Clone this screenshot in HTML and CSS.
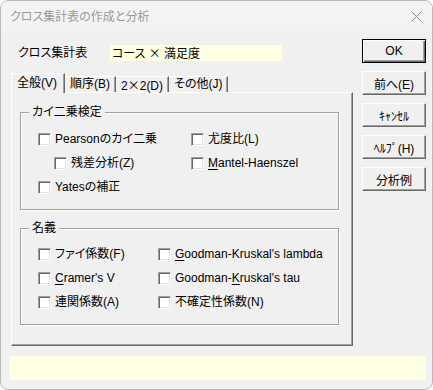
FILE: index.html
```html
<!DOCTYPE html>
<html lang="ja">
<head>
<meta charset="utf-8">
<title>クロス集計表の作成と分析</title>
<link rel="stylesheet" href="styles.css">
</head>
<body>
<div class="window">
  <div class="titlebar">
    <span class="title">クロス集計表の作成と分析</span>
    <svg class="close" width="11" height="11" viewBox="0 0 11 11"><path d="M0.5 0.5L10.5 10.5M10.5 0.5L0.5 10.5" stroke="#8c8c8c" stroke-width="1" fill="none"/></svg>
  </div>
  <div class="client">
    <div class="top">
      <div class="main">
        <div class="field-row">
          <span class="field-label">クロス集計表</span>
          <span class="field-value">コース <span class="cjk">×</span> 満足度</span>
        </div>
        <div class="tabs">
          <div class="tab active">全般(V)</div>
          <div class="tab">順序(B)</div>
          <div class="tab">2<span class="cjk">×</span>2(D)</div>
          <div class="tab">その他(J)</div>
        </div>
        <div class="panel">
          <fieldset class="group">
            <legend>カイ二乗検定</legend>
            <div class="grid grid-chi">
              <label class="chk"><span class="box"></span><span>Pearsonのカイ二乗</span></label>
              <label class="chk"><span class="box"></span><span>尤度比(L)</span></label>
              <label class="chk indent"><span class="box"></span><span>残差分析(Z)</span></label>
              <label class="chk"><span class="box"></span><span><u>M</u>antel-Haenszel</span></label>
              <label class="chk"><span class="box"></span><span>Yatesの補正</span></label>
            </div>
          </fieldset>
          <fieldset class="group group-nominal">
            <legend>名義</legend>
            <div class="grid grid-nom">
              <label class="chk"><span class="box"></span><span>ファイ係数(F)</span></label>
              <label class="chk"><span class="box"></span><span><u>G</u>oodman-Kruskal's lambda</span></label>
              <label class="chk"><span class="box"></span><span><u>C</u>ramer's V</span></label>
              <label class="chk"><span class="box"></span><span>Goodman-<u>K</u>ruskal's tau</span></label>
              <label class="chk"><span class="box"></span><span>連関係数(A)</span></label>
              <label class="chk"><span class="box"></span><span>不確定性係数(N)</span></label>
            </div>
          </fieldset>
        </div>
      </div>
      <div class="buttons">
        <div class="btn default">OK</div>
        <div class="btn">前へ(E)</div>
        <div class="btn">ｷｬﾝｾﾙ</div>
        <div class="btn">ﾍﾙﾌﾟ(H)</div>
        <div class="btn">分析例</div>
      </div>
    </div>
    <div class="status"></div>
  </div>
</div>
</body>
</html>
```

FILE: styles.css
```css
html, body {
  margin: 0;
  padding: 0;
  background: #ffffff;
}
body {
  font-family: "Liberation Sans", "Noto Sans CJK JP", sans-serif;
  font-size: 12px;
  color: #000;
  font-feature-settings: "palt";
}
.cjk {
  font-family: "Noto Sans CJK JP", sans-serif;
  font-feature-settings: normal;
}
.window {
  width: 433px;
  height: 390px;
  box-sizing: border-box;
  border: 1px solid #b9b9b9;
  border-radius: 8px;
  background: #f0f0f0;
  overflow: hidden;
  display: flex;
  flex-direction: column;
}
.titlebar {
  height: 30px;
  flex: none;
  background: #f3f3f3;
  display: flex;
  align-items: center;
  justify-content: space-between;
  padding: 0 10px 0 9px;
}
.title {
  color: #9a9a9a;
  font-family: "Noto Sans CJK JP", sans-serif;
  font-size: 12px;
  line-height: 16px;
}
.close {
  display: block;
  margin-top: 1px;
}
.client {
  display: flex;
  flex-direction: column;
}
.top {
  display: flex;
  align-items: flex-start;
}
.main {
  padding: 14px 0 0 10px;
  width: 342px;
}
.field-row {
  display: flex;
  align-items: center;
  height: 16px;
}
.field-label {
  width: 92px;
  margin-left: 7px;
  line-height: 16px;
}
.field-value {
  width: 172px;
  height: 16px;
  line-height: 16px;
  background: #ffffe1;
  padding-left: 2px;
  box-sizing: border-box;
  white-space: pre;
}
.tabs {
  margin-top: 12px;
  height: 19px;
  display: flex;
  align-items: flex-end;
}
.tab {
  height: 16px;
  line-height: 15px;
  padding: 0 5px 0 5px;
  box-sizing: border-box;
  border-top: 1px solid #ffffff;
  border-right: 1px solid #696969;
  box-shadow: inset -1px 0 0 #a0a0a0;
  white-space: nowrap;
}
.tab.active {
  height: 20px;
  line-height: 18px;
  margin-bottom: -1px;
  padding: 0 7px 0 5px;
  border-left: 1px solid #ffffff;
  background: #f0f0f0;
  position: relative;
  z-index: 1;
}
.panel {
  width: 342px;
  height: 254px;
  box-sizing: border-box;
  padding: 11px 13px 0 8px;
  border-top: 1px solid #ffffff;
  border-left: 1px solid #ffffff;
  border-right: 1px solid #696969;
  border-bottom: 1px solid #696969;
  box-shadow: inset -1px -1px 0 #a0a0a0;
}
.group {
  margin: 0;
  padding: 7px 0 10px 8px;
  border: 1px solid #a0a0a0;
  box-shadow: inset 1px 1px 0 #ffffff, 1px 1px 0 #ffffff;
  min-width: 0;
}
.group legend {
  padding: 0 3px;
  line-height: 16px;
  background: #f0f0f0;
}
.group-nominal {
  margin-top: 10px;
  padding-top: 6px;
}
.grid {
  display: grid;
  margin-left: 9px;
  grid-auto-rows: 24px;
}
.grid-chi {
  grid-template-columns: 153px 1fr;
}
.grid-nom {
  grid-template-columns: 120px 1fr;
}
.chk {
  display: flex;
  align-items: center;
  gap: 4px;
  white-space: nowrap;
  line-height: 16px;
}
.chk.indent {
  padding-left: 16px;
}
.chk u {
  text-decoration-thickness: 1px;
  text-underline-offset: 2px;
}
.box {
  width: 13px;
  height: 13px;
  box-sizing: border-box;
  flex: none;
  background: #ffffff;
  border-top: 1px solid #a0a0a0;
  border-left: 1px solid #a0a0a0;
  border-right: 1px solid #ffffff;
  border-bottom: 1px solid #ffffff;
  box-shadow: inset 1px 1px 0 #696969, inset -1px -1px 0 #e3e3e3;
}
.buttons {
  margin-left: 9px;
  padding-top: 8px;
  display: flex;
  flex-direction: column;
  gap: 8px;
}
.btn {
  width: 64px;
  height: 24px;
  box-sizing: border-box;
  display: flex;
  align-items: center;
  justify-content: center;
  background: #f0f0f0;
  border-top: 1px solid #ffffff;
  border-left: 1px solid #ffffff;
  border-right: 1px solid #696969;
  border-bottom: 1px solid #696969;
  box-shadow: inset -1px -1px 0 #a0a0a0;
  font-feature-settings: normal;
  white-space: nowrap;
}
.btn.default {
  border: 1px solid #000000;
  box-shadow: inset 1px 1px 0 #ffffff, inset -1px -1px 0 #696969, inset -2px -2px 0 #a0a0a0;
}
.status {
  margin: 10px 6px 0 8px;
  height: 24px;
  background: #ffffe1;
}
```
